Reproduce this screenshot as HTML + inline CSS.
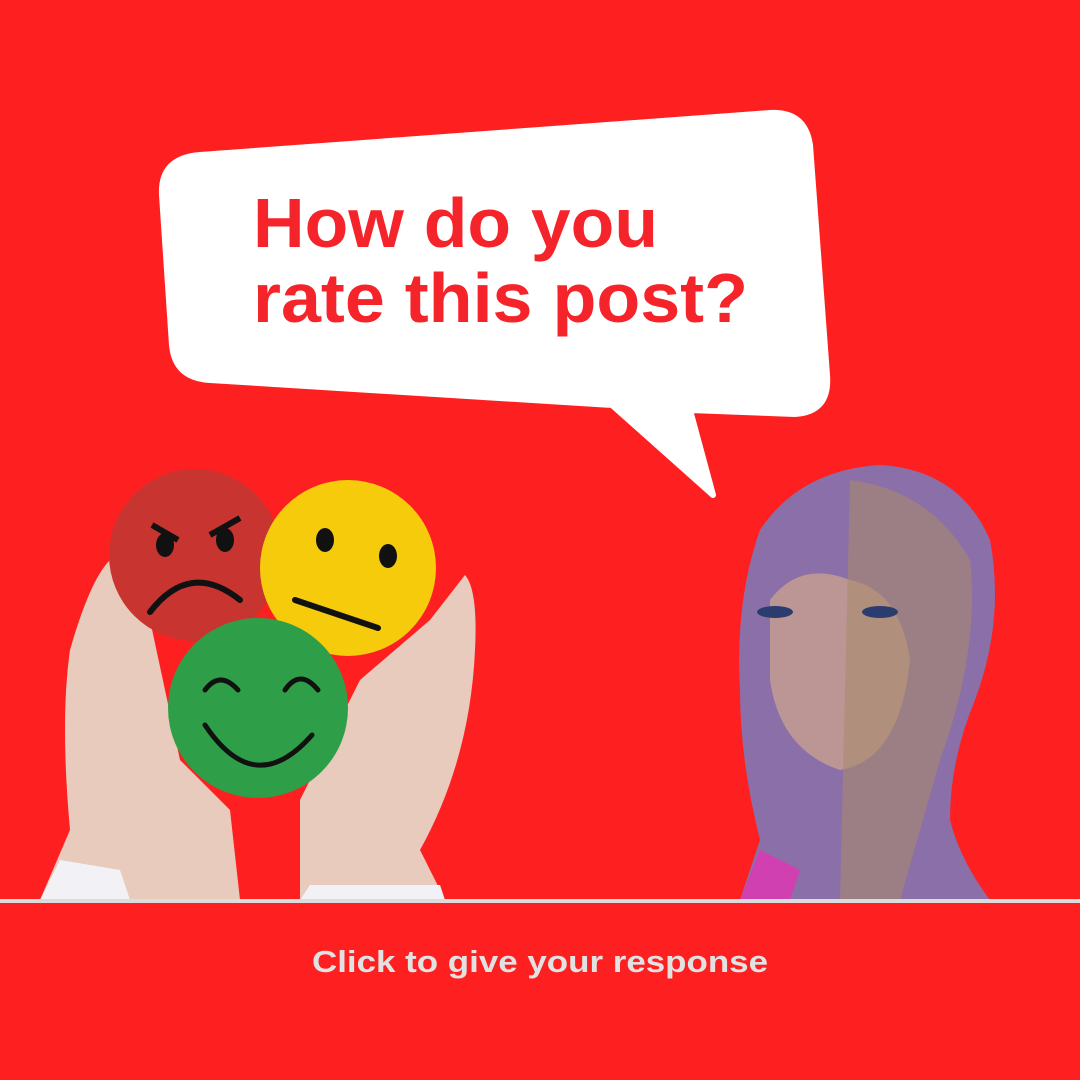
<!DOCTYPE html>
<html><head><meta charset="utf-8"><style>
html,body{margin:0;padding:0;background:#fe2020;}
svg{display:block}
</style></head><body>
<svg width="1080" height="1080" viewBox="0 0 1080 1080" xmlns="http://www.w3.org/2000/svg">
<rect width="1080" height="1080" fill="#fe2020"/>
<!-- speech bubble -->
<path d="M200,155 L770,113 Q805,111 810,145 L827,375 Q830,412 795,414 L690,410 L713,495 L612,405 L210,380 Q175,378 172,345 L162,195 Q160,158 200,155 Z" fill="#fff" stroke="#fff" stroke-width="6" stroke-linejoin="round"/>
<text x="253" y="247" font-family="Liberation Sans, sans-serif" font-weight="bold" font-size="70" fill="#f5242a" textLength="405" lengthAdjust="spacingAndGlyphs">How do you</text>
<text x="253" y="322" font-family="Liberation Sans, sans-serif" font-weight="bold" font-size="70" fill="#f5242a" textLength="495" lengthAdjust="spacingAndGlyphs">rate this post?</text>
<!-- hands -->
<path d="M40,900 L70,830 Q60,720 70,650 Q90,580 110,560 L150,620 L180,760 L230,810 L240,900 Z" fill="#e9cbbd"/>
<path d="M445,900 L420,850 Q470,760 475,650 Q478,590 465,575 L430,620 L360,680 L300,800 L300,900 Z" fill="#e9cbbd"/>
<path d="M40,900 L60,860 L120,870 L130,900 Z" fill="#f2f2f6"/>
<path d="M300,900 L310,885 L440,885 L445,900 Z" fill="#f2f2f6"/>
<!-- emojis -->
<circle cx="195" cy="555" r="86" fill="#c83530"/>
<g stroke="#111" stroke-width="6" fill="none" stroke-linecap="round">
<path d="M150,612 Q190,560 240,600"/>
</g>
<ellipse cx="165" cy="545" rx="9" ry="12" fill="#111"/><ellipse cx="225" cy="540" rx="9" ry="12" fill="#111"/>
<path d="M152,525 L178,540 M210,535 L240,518" stroke="#111" stroke-width="6"/>
<circle cx="348" cy="568" r="88" fill="#f6cb0c"/>
<ellipse cx="325" cy="540" rx="9" ry="12" fill="#111"/><ellipse cx="388" cy="556" rx="9" ry="12" fill="#111"/>
<path d="M295,600 L378,628" stroke="#111" stroke-width="6" stroke-linecap="round"/>
<circle cx="258" cy="708" r="90" fill="#2f9e48"/>
<g stroke="#111" stroke-width="5" fill="none" stroke-linecap="round">
<path d="M205,690 Q220,670 238,690"/><path d="M285,690 Q300,668 318,690"/>
<path d="M205,725 Q255,800 312,735"/></g>
<!-- robot head -->
<path d="M740,900 L760,840 Q740,760 740,690 Q735,600 760,530 Q800,470 880,465 Q960,470 990,540 Q1005,620 975,700 Q950,760 950,820 Q960,860 990,900 Z" fill="#8b6fa8"/>
<path d="M770,600 Q800,560 850,580 Q900,590 910,660 Q900,760 840,770 Q780,750 770,680 Z" fill="#c7a08e" opacity="0.8"/>
<path d="M850,480 Q930,490 970,560 Q980,650 940,760 L900,900 L840,900 Z" fill="#a88a6c" opacity="0.6"/>
<ellipse cx="775" cy="612" rx="18" ry="6" fill="#2b3d6e"/><ellipse cx="880" cy="612" rx="18" ry="6" fill="#2b3d6e"/>
<path d="M740,900 L760,850 L800,870 L790,900 Z" fill="#d040b0"/>
<!-- line -->
<rect x="0" y="899" width="1080" height="4" fill="#dcdcdc"/>
<text x="540" y="972" text-anchor="middle" font-family="Liberation Sans, sans-serif" font-weight="bold" font-size="31" fill="#e2e2e2" textLength="456" lengthAdjust="spacingAndGlyphs">Click to give your response</text>
</svg>
</body></html>
